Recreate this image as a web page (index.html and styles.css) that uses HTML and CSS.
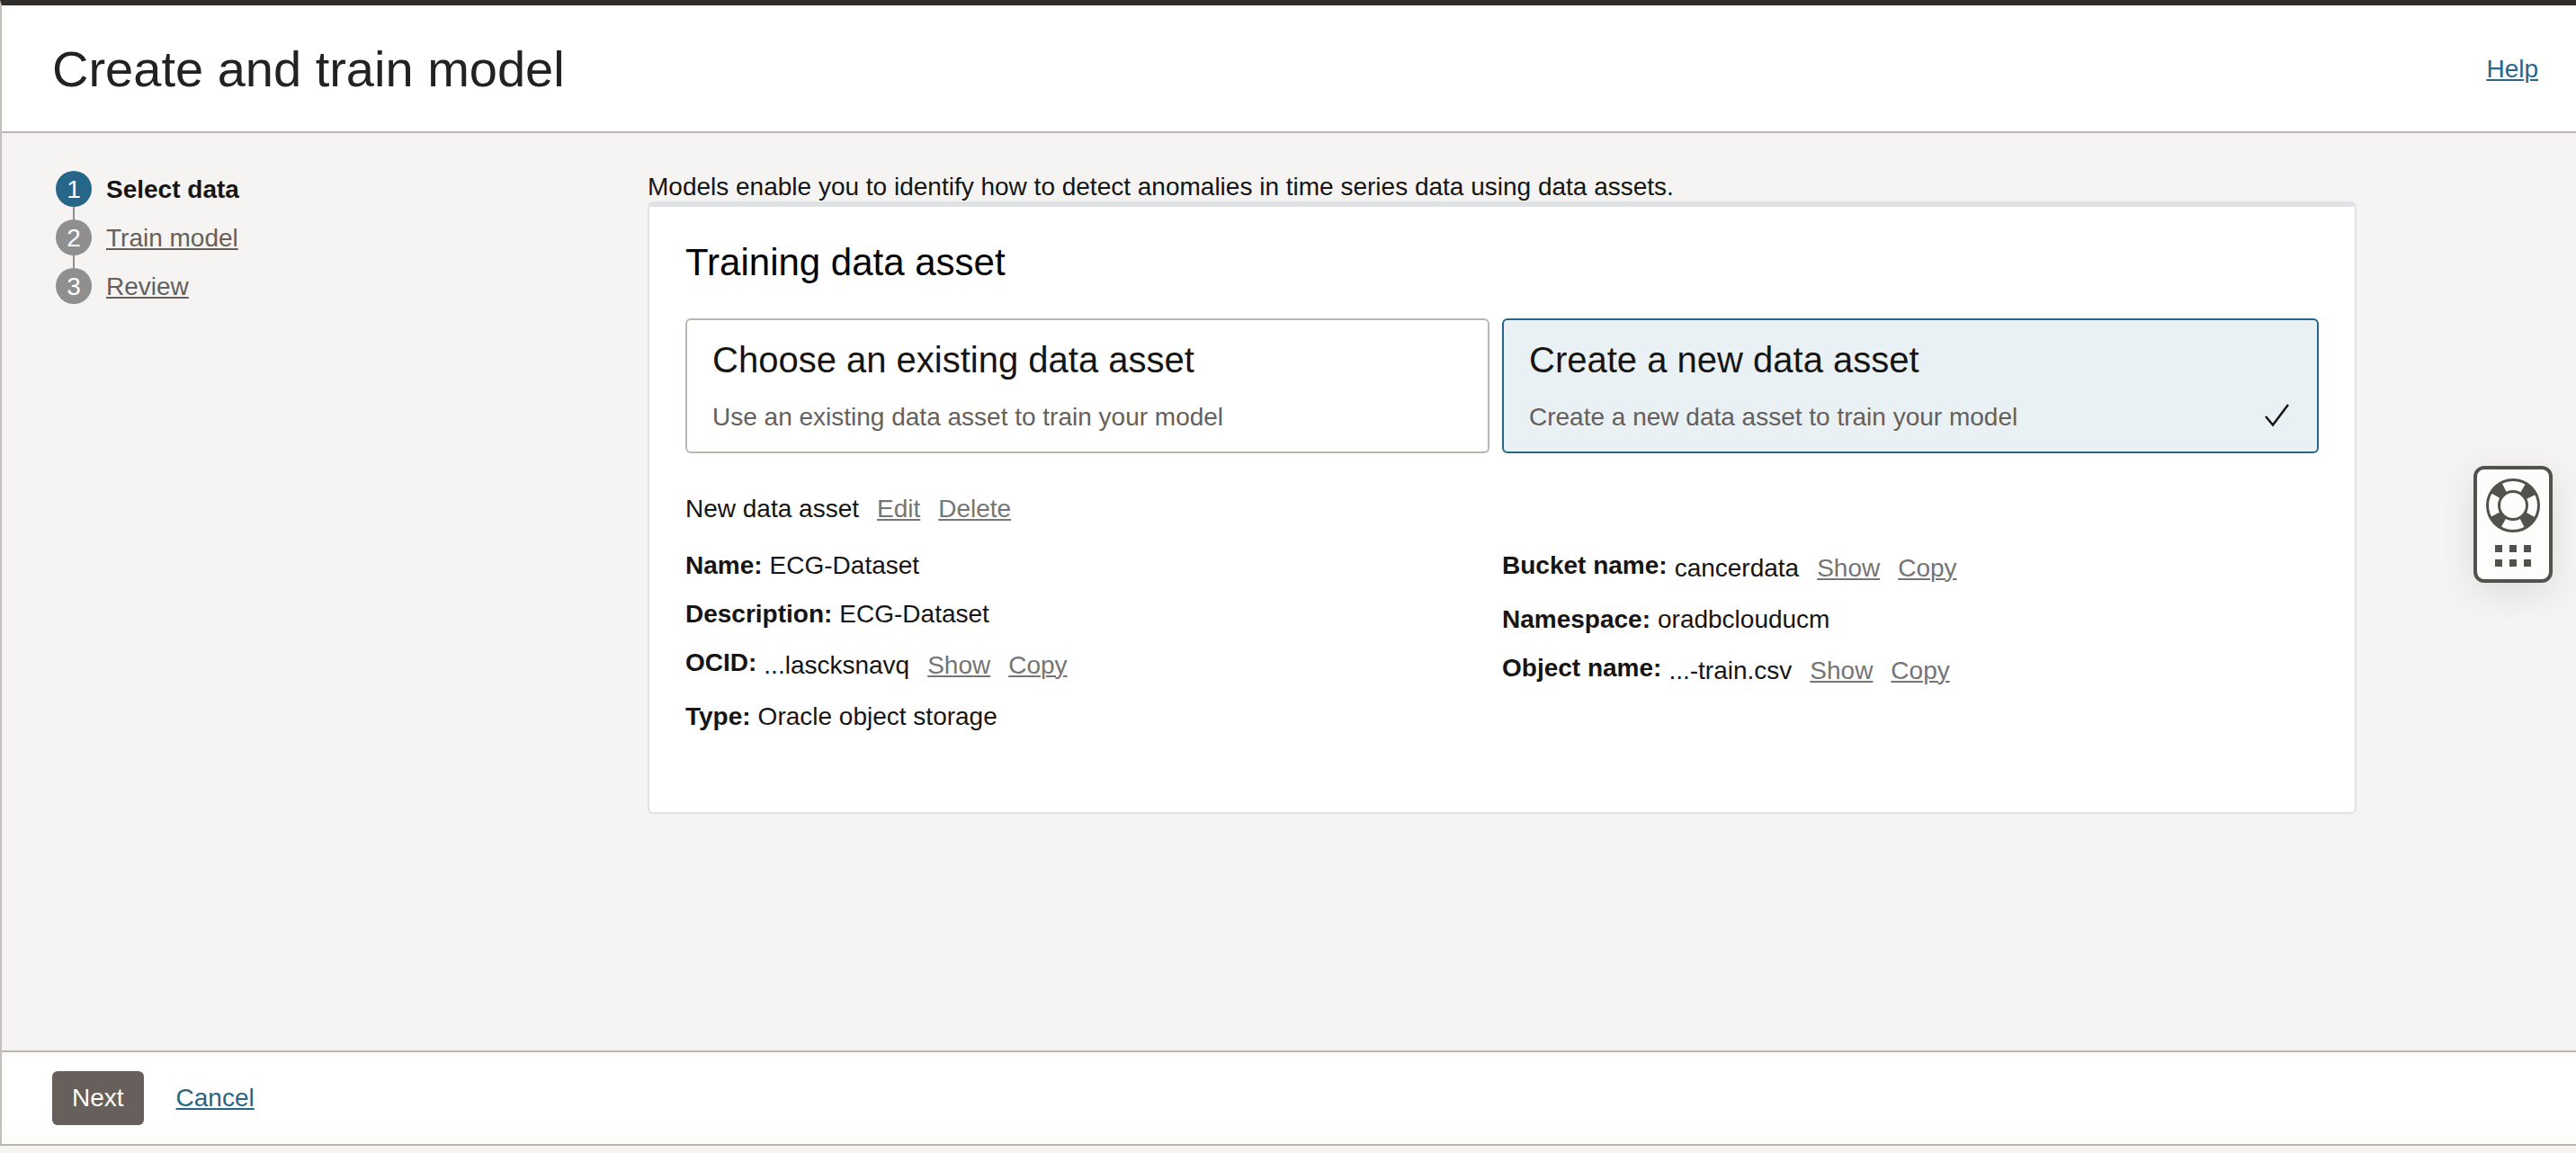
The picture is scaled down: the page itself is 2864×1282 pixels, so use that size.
FILE: index.html
```html
<!DOCTYPE html>
<html lang="en">
<head>
<meta charset="utf-8">
<title>Create and train model</title>
<link rel="stylesheet" href="styles.css">
</head>
<body>
<div class="panel">
  <header class="panel-header">
    <h1>Create and train model</h1>
    <a class="link" href="#help">Help</a>
  </header>
  <div class="panel-body">
    <nav class="wizard" aria-label="Steps">
      <ol class="steps">
        <li class="step step-current"><span class="step-number">1</span><span class="step-name">Select data</span></li>
        <li class="step"><span class="step-number">2</span><a class="step-name" href="#train">Train model</a></li>
        <li class="step"><span class="step-number">3</span><a class="step-name" href="#review">Review</a></li>
      </ol>
    </nav>
    <main class="content">
      <p class="intro">Models enable you to identify how to detect anomalies in time series data using data assets.</p>
      <section class="card">
        <h2>Training data asset</h2>
        <div class="options">
          <button type="button" class="option" aria-pressed="false">
            <span class="option-title">Choose an existing data asset</span>
            <span class="option-text">Use an existing data asset to train your model</span>
          </button>
          <button type="button" class="option option-selected" aria-pressed="true">
            <span class="option-title">Create a new data asset</span>
            <span class="option-text">Create a new data asset to train your model</span>
            <svg class="check" viewBox="0 0 32 32" aria-hidden="true"><path d="M3 17l8 9.500L28 4" fill="none" stroke="#161513" stroke-width="2.500"/></svg>
          </button>
        </div>
        <div class="asset-bar">
          <span>New data asset</span>
          <a class="action" href="#edit">Edit</a>
          <a class="action" href="#delete">Delete</a>
        </div>
        <div class="details">
          <dl class="detail-list">
            <div class="detail"><dt>Name:</dt><dd>ECG-Dataset</dd></div>
            <div class="detail"><dt>Description:</dt><dd>ECG-Dataset</dd></div>
            <div class="detail detail-actions"><dt>OCID:</dt><dd>...lascksnavq <a class="action" href="#show">Show</a> <a class="action" href="#copy">Copy</a></dd></div>
            <div class="detail"><dt>Type:</dt><dd>Oracle object storage</dd></div>
          </dl>
          <dl class="detail-list">
            <div class="detail detail-actions"><dt>Bucket name:</dt><dd>cancerdata <a class="action" href="#show">Show</a> <a class="action" href="#copy">Copy</a></dd></div>
            <div class="detail"><dt>Namespace:</dt><dd>oradbclouducm</dd></div>
            <div class="detail detail-actions"><dt>Object name:</dt><dd>...-train.csv <a class="action" href="#show">Show</a> <a class="action" href="#copy">Copy</a></dd></div>
          </dl>
        </div>
      </section>
    </main>
  </div>
  <footer class="panel-footer">
    <button type="button" class="next">Next</button>
    <a class="link" href="#cancel">Cancel</a>
  </footer>
</div>
<button type="button" class="support" aria-label="Support">
  <svg viewBox="0 0 80 122" aria-hidden="true">
    <g fill="none" stroke="#53514b">
      <circle cx="40" cy="40" r="22" stroke-width="15" stroke-dasharray="13 21.558" stroke-dashoffset="-10.78"/>
      <circle cx="40" cy="40" r="28.500" stroke-width="3"/>
      <circle cx="40" cy="40" r="15.500" stroke-width="3"/>
    </g>
    <path fill="#53514b" d="M20 84h8v8h-8zM36 84h8v8h-8zM52 84h8v8h-8zM20 100h8v8h-8zM36 100h8v8h-8zM52 100h8v8h-8z"/>
  </svg>
</button>
</body>
</html>
```
FILE: styles.css
```css
* {
  box-sizing: border-box;
}

body {
  margin: 0;
  min-height: 100vh;
  padding-bottom: 8px;
  display: flex;
  flex-direction: column;
  background: #f5f4f2;
  color: #161513;
  font: 28px/40px "Liberation Sans", Arial, sans-serif;
}

h1,
h2,
p,
ol,
dl,
dd {
  margin: 0;
  padding: 0;
}

h1,
h2 {
  font-weight: 400;
}

button {
  font: inherit;
  cursor: pointer;
}

a {
  text-decoration-thickness: 2px;
  text-underline-offset: 2px;
}

.link {
  color: #266789;
}

.panel {
  flex: 1;
  display: flex;
  flex-direction: column;
  border-top: 6px solid #312d2a;
  border-left: 2px solid #c4bfbb;
  border-bottom: 2px solid #bcb6b1;
}

.panel-header {
  display: flex;
  align-items: center;
  justify-content: space-between;
  min-height: 142px;
  padding: 2px 42px 0 56px;
  background: #fff;
  border-bottom: 2px solid #bcb6b1;
}

h1 {
  color: #222;
  font-size: 56px;
  line-height: 68px;
}

.panel-body {
  flex: 1;
  display: flex;
  padding: 40px 244px 48px 60px;
}

.wizard {
  flex: 0 0 658px;
}

.steps {
  display: flex;
  flex-direction: column;
  gap: 12px;
  padding-top: 2px;
  list-style: none;
}

.step {
  position: relative;
  display: flex;
  gap: 16px;
  line-height: 42px;
}

.step + .step::before {
  content: "";
  position: absolute;
  left: 19px;
  top: -14px;
  width: 2px;
  height: 14px;
  background: #8f8f8f;
}

.step-number {
  width: 40px;
  height: 40px;
  border-radius: 50%;
  background: #8f8f8f;
  color: #fff;
  text-align: center;
}

.step-name {
  color: #665f5b;
}

.step-current .step-number {
  background: #266789;
}

.step-current .step-name {
  color: #161513;
  font-weight: 700;
}

.content {
  flex: 1;
  min-width: 0;
}

.intro {
  padding-top: 4px;
  line-height: 32px;
}

.card {
  padding: 40px 40px 86px;
  background: #fff;
  border: 2px solid #e1e2e6;
  border-top-width: 6px;
  border-radius: 6px;
}

h2 {
  color: #000;
  font-size: 42px;
  line-height: 44px;
}

.options {
  display: grid;
  grid-template-columns: calc(50% - 14px) 50%;
  gap: 14px;
  margin-top: 40px;
}

.option {
  position: relative;
  display: flex;
  flex-direction: column;
  gap: 20px;
  padding: 20px 28px 18px;
  background: #fff;
  border: 2px solid #bcb6b1;
  border-radius: 6px;
  color: #161513;
  text-align: left;
}

.option-selected {
  background: #e9f1f4;
  border-color: #266789;
}

.option-title {
  font-size: 40px;
  line-height: 48px;
}

.option-text {
  color: #665f5b;
}

.check {
  position: absolute;
  right: 28px;
  bottom: 24px;
  width: 32px;
  height: 32px;
}

.asset-bar {
  display: flex;
  gap: 20px;
  margin-top: 42px;
}

.action {
  color: #757575;
}

.details {
  display: grid;
  grid-template-columns: 1fr 1fr;
  margin-top: 23px;
}

.detail-list {
  display: flex;
  flex-direction: column;
  gap: 14px;
}

.detail {
  display: flex;
  gap: 8px;
}

.detail dt {
  font-weight: 700;
}

.detail-actions dd {
  display: flex;
  gap: 20px;
  line-height: 46px;
}

.panel-footer {
  display: flex;
  align-items: center;
  gap: 36px;
  min-height: 104px;
  padding: 0 56px;
  background: linear-gradient(#fff 75%, #fcfcfb);
  border-top: 2px solid #bcb6b1;
}

.next {
  height: 60px;
  padding: 0 22px;
  border: 0;
  border-radius: 6px;
  background: #665f5b;
  color: #fff;
}

.support {
  position: fixed;
  right: 26px;
  top: calc(50% - 123px);
  width: 88px;
  height: 130px;
  padding: 0;
  background: #fdfdfb;
  border: 4px solid #53514b;
  border-radius: 12px;
  box-shadow: 0 10px 40px rgba(0, 0, 0, 0.1);
}

.support svg {
  display: block;
  width: 80px;
  height: 122px;
}
```
